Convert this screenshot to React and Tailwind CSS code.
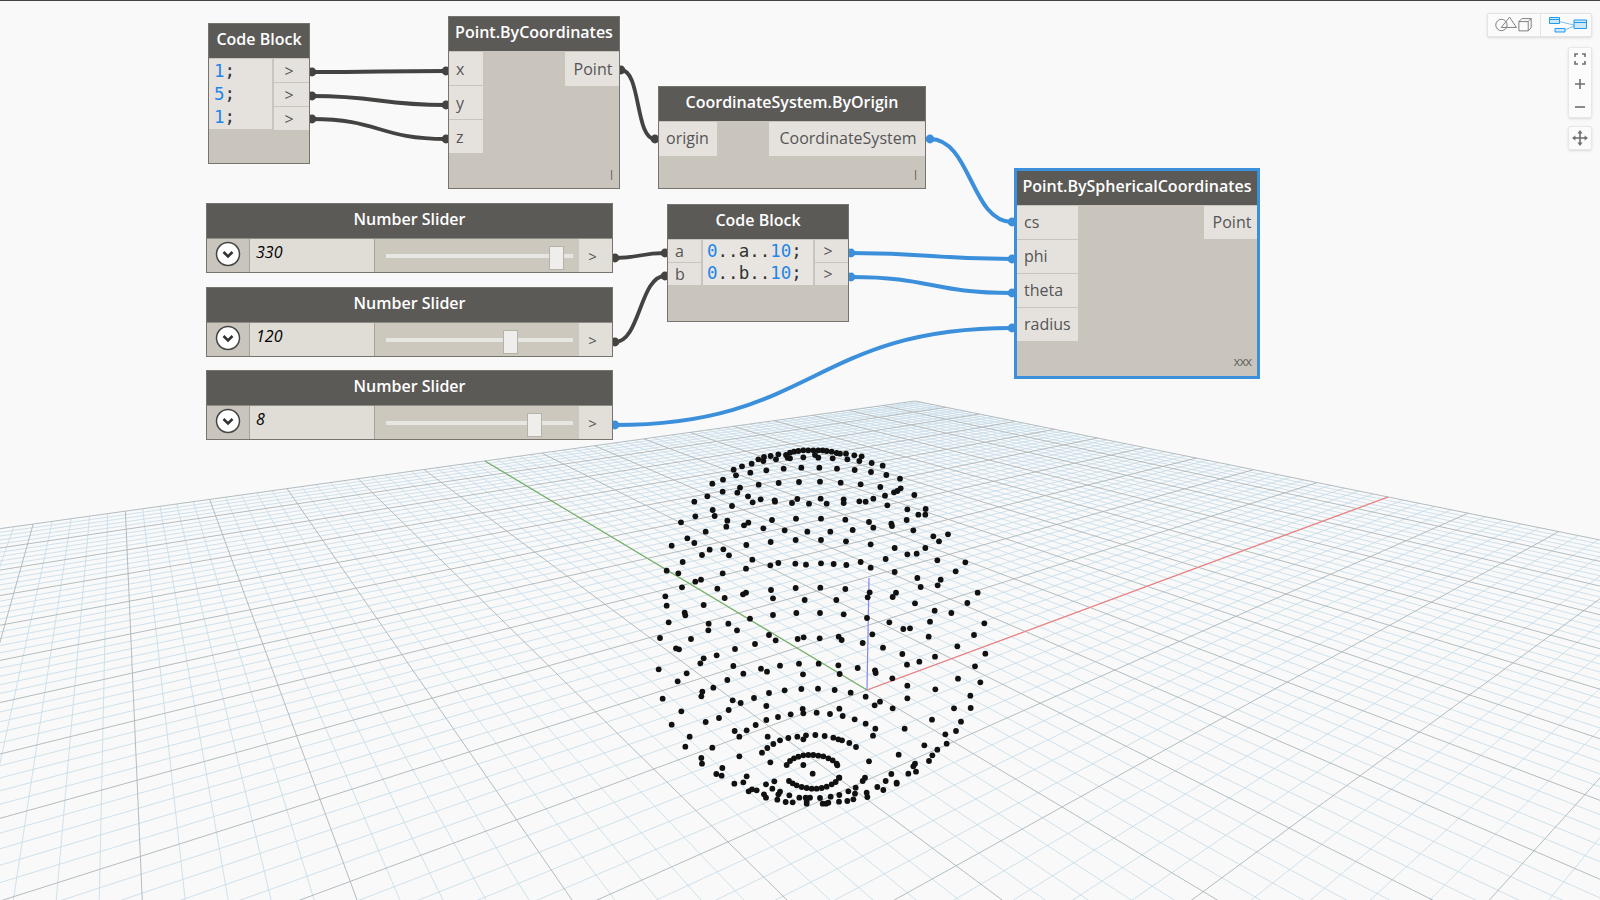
import React from 'react';

// ground plane -> screen, fitted on origin and the axis ends
const H = { a: 1552, b: 116.8, c: 867, d: 175.3, e: 244.1, f: 689, g: 0.7426, h: 1.0285 };
const project = (u, v) => {
  const w = H.g * u + H.h * v + 1;
  return [(H.a * u + H.b * v + H.c) / w, (H.d * u + H.e * v + H.f) / w];
};

const gridLine = (fixed, isU) => {
  // walk back from the far edge until just before the horizon
  const far = 1;
  let near = -1;
  const w = t => (isU ? H.g * fixed + H.h * t + 1 : H.g * t + H.h * fixed + 1);
  if (w(near) < 0.12) {
    const coef = isU ? H.h : H.g;
    const rest = isU ? H.g * fixed + 1 : H.h * fixed + 1;
    near = (0.12 - rest) / coef;
  }
  if (near >= far) return '';
  const p1 = isU ? project(fixed, far) : project(far, fixed);
  const p2 = isU ? project(fixed, near) : project(near, fixed);
  return `M${p1[0].toFixed(1)} ${p1[1].toFixed(1)}L${p2[0].toFixed(1)} ${p2[1].toFixed(1)}`;
};

let minorPath = '';
let majorPath = '';
for (let i = -50; i <= 50; i++) {
  const t = i / 50;
  const seg = gridLine(t, true) + gridLine(t, false);
  if (i % 5 === 0) majorPath += seg;
  else minorPath += seg;
}

// points read off the viewport, in 3x crop coordinates
const upperPts = [[438,72],[450,65],[462,62],[475,60],[490,58],[505,58],[520,58],[535,58],[548,58],[560,60],[575,62],[590,66],[600,68],[415,70],[443,80],[392,75],[372,78],[355,85],[370,90],[408,85],[450,82],[490,79],[525,72],[535,80],[578,82],[618,68],[622,85],[643,73],[665,76],[658,90],[695,96],[728,104],[335,98],[306,106],[281,116],[288,133],[331,125],[379,118],[431,113],[484,110],[538,110],[591,113],[644,117],[693,123],[739,132],[780,143],[249,146],[217,158],[356,161],[416,156],[477,153],[540,152],[602,155],[662,160],[721,168],[248,182],[300,170],[292,185],[202,196],[163,212],[324,196],[338,214],[362,205],[404,208],[405,212],[456,216],[472,204],[507,218],[542,203],[560,218],[611,205],[611,216],[658,211],[677,212],[700,203],[735,194],[742,223],[762,184],[772,180],[782,172],[823,192],[276,225],[218,237],[224,255],[166,256],[123,274],[262,269],[259,287],[312,283],[325,275],[396,267],[468,263],[543,263],[616,266],[687,273],[700,290],[754,278],[756,285],[800,267],[802,235],[835,251],[857,234],[856,251],[197,302],[370,292],[434,298],[502,302],[571,302],[638,297],[820,298],[880,316],[897,331],[924,310],[142,322],[163,336],[95,344],[209,356],[250,355],[319,342],[392,333],[467,327],[543,327],[618,331],[692,340],[764,351],[856,351],[802,370],[830,368],[186,372],[267,373],[337,386],[128,393],[391,403],[415,396],[466,398],[498,401],[543,397],[581,399],[619,402],[662,393],[692,410],[737,384],[892,388],[976,394],[80,419],[115,427],[248,427],[318,413],[764,423],[947,421],[183,446],[166,452],[832,441],[902,446],[126,469],[232,473],[393,477],[467,471],[541,470],[616,474],[893,463],[842,468],[318,485],[309,490],[76,496],[254,501],[399,502],[494,507],[589,507],[683,499],[689,484],[768,485],[758,498],[1013,485],[80,524],[191,522],[825,517],[982,516],[134,545],[136,553],[330,563],[399,552],[469,546],[540,546],[611,550],[681,561],[884,539],[934,546],[86,574],[206,578],[265,578],[748,574],[870,572],[1033,577]];
const lowerPts = [[60,51],[153,54],[205,28],[291,28],[387,42],[407,58],[473,54],[491,49],[539,52],[596,47],[605,57],[668,66],[697,40],[790,24],[810,22],[866,47],[1002,42],[952,76],[1036,98],[729,80],[787,99],[885,107],[108,82],[117,85],[230,103],[285,84],[345,69],[191,112],[181,127],[838,122],[801,131],[1005,136],[56,145],[140,157],[280,135],[363,143],[381,152],[420,134],[477,128],[536,128],[595,133],[653,141],[705,148],[707,156],[310,158],[489,160],[599,159],[113,181],[262,177],[757,172],[954,173],[1021,184],[802,194],[220,200],[886,205],[187,212],[184,226],[387,216],[434,208],[484,204],[534,203],[584,207],[632,215],[677,227],[991,224],[802,232],[68,233],[342,231],[278,238],[302,246],[720,242],[704,253],[379,255],[758,262],[942,262],[992,261],[266,267],[124,271],[488,264],[490,277],[598,263],[452,280],[530,275],[570,279],[414,288],[608,285],[379,297],[237,291],[197,303],[644,295],[876,296],[963,302],[347,312],[677,308],[95,311],[320,328],[284,330],[706,323],[794,323],[948,330],[298,347],[149,347],[699,344],[916,340],[383,347],[472,347],[498,343],[490,355],[526,342],[554,345],[580,350],[595,355],[606,358],[628,366],[648,378],[420,358],[445,351],[400,369],[382,381],[366,395],[136,377],[217,380],[853,373],[920,368],[892,386],[877,403],[776,401],[298,406],[184,411],[186,428],[391,424],[867,420],[825,428],[820,436],[687,421],[247,441],[229,459],[245,464],[320,466],[805,458],[828,452],[754,459],[283,488],[310,484],[378,490],[403,481],[397,503],[737,480],[770,485],[675,470],[668,480],[597,470],[518,458],[490,432],[440,432],[450,420],[462,412],[475,407],[490,403],[505,402],[520,402],[535,404],[550,406],[565,412],[578,418],[590,428],[592,433],[447,480],[458,487],[470,493],[485,498],[500,501],[515,503],[530,503],[545,501],[560,497],[575,490],[587,483],[598,470],[326,511],[336,505],[350,508],[372,520],[378,530],[415,520],[420,512],[412,536],[437,543],[458,544],[448,523],[478,530],[497,530],[510,530],[500,548],[540,531],[548,548],[558,548],[565,545],[572,527],[598,522],[597,542],[625,511],[622,540],[645,518],[640,535],[647,500],[680,515],[682,528],[712,498],[730,507],[770,488],[500,540]];

const wire = (x1, y1, x2, y2) => {
  const k = Math.max(20, (x2 - x1) * 0.5);
  return `M${x1} ${y1}C${x1 + k} ${y1} ${x2 - k} ${y2} ${x2} ${y2}`;
};

const darkWires = [
  [312, 71, 446, 70],
  [312, 95, 446, 104],
  [312, 118, 446, 138],
  [621, 69, 655, 138],
  [615, 257, 665, 252],
  [615, 341, 665, 275],
];
const blueWires = [
  [930, 138, 1012, 221],
  [851, 252, 1012, 258],
  [851, 276, 1012, 292],
  [615, 424, 1012, 327],
];

function Viewport() {
  return (
    <svg className="absolute inset-0" width="1600" height="900" viewBox="0 0 1600 900">
      <path d={minorPath} fill="none" stroke="#c4dbe8" strokeWidth="0.8" />
      <path d={majorPath} fill="none" stroke="#aab5ba" strokeWidth="0.9" />
      <line x1="867" y1="689" x2="485" y2="460" stroke="#79b46c" strokeWidth="1.2" />
      <line x1="867" y1="689" x2="1388" y2="496" stroke="#f47f7f" strokeWidth="1.2" />
      <line x1="867" y1="689" x2="869" y2="577" stroke="#8585f0" strokeWidth="1.2" />
      {upperPts.map(([x, y], i) => (
        <circle key={i} cx={640 + x / 3} cy={430 + y / 3} r="2.9" fill="#111" />
      ))}
      {lowerPts.map(([x, y], i) => (
        <circle key={i} cx={640 + x / 3} cy={620 + y / 3} r="2.9" fill="#111" />
      ))}
    </svg>
  );
}

function Wires() {
  return (
    <svg className="absolute inset-0" width="1600" height="900" viewBox="0 0 1600 900">
      {darkWires.map(([a, b, c, d], i) => (
        <g key={i}>
          <path d={wire(a, b, c, d)} fill="none" stroke="#444341" strokeWidth="3.8" />
          <circle cx={a} cy={b} r="4.4" fill="#444341" />
          <circle cx={c} cy={d} r="4.4" fill="#444341" />
        </g>
      ))}
      {blueWires.map(([a, b, c, d], i) => (
        <g key={i}>
          <path d={wire(a, b, c, d)} fill="none" stroke="#3c8fdb" strokeWidth="4" />
          <circle cx={a} cy={b} r="4.4" fill="#3c8fdb" />
          <circle cx={c} cy={d} r="4.4" fill="#3c8fdb" />
        </g>
      ))}
    </svg>
  );
}

function Node({ title, className, selected, children }) {
  return (
    <div
      className={`absolute flex flex-col bg-[#c9c5bd] ${
        selected ? 'border-[3px] border-[#3c8fdb]' : 'border border-[#77746e]'
      } ${className}`}
    >
      <div className="flex h-[34px] shrink-0 items-center justify-center bg-[#5c5a57] pb-[4px] text-[16px] font-semibold text-white">
        {title}
      </div>
      {children}
    </div>
  );
}

function Cell({ className, children }) {
  return (
    <div className={`flex items-center bg-[#e5e2de] text-[16px] text-[#555] ${className}`}>
      {children}
    </div>
  );
}

function Slider({ className, value, thumbClass }) {
  return (
    <Node title="Number Slider" className={`left-[206px] h-[70px] w-[407px] ${className}`}>
      <div className="flex flex-1 border-t border-[#8f8c86]">
        <div className="flex w-[43px] items-center justify-center border-r border-[#a5a29c] bg-[#c9c5bd] pb-[3px]">
          <svg width="26" height="26" viewBox="0 0 26 26">
            <circle cx="13" cy="13" r="11.5" fill="#fff" stroke="#444" strokeWidth="1.5" />
            <path d="M8.5 11 13 15.5 17.5 11" fill="none" stroke="#333" strokeWidth="2.6" />
          </svg>
        </div>
        <div className="w-[125px] border-r border-[#a5a29c] bg-[#e0ddd7] pl-[6px] text-[16px] leading-[26px] text-black italic">
          {value}
        </div>
        <div className="relative flex flex-1 items-center bg-[#cdc8be] pl-[11px] pr-[6px]">
          <div className="h-[4px] flex-1 bg-[#e8e6e2]" />
          <div className={`absolute top-[7px] h-[24px] w-[15px] border border-[#b5b2ac] bg-[#efeeec] ${thumbClass}`} />
        </div>
        <div className="flex w-[33px] items-center justify-center bg-[#e2dfd9] pr-[6px] pt-[2px] text-[15px] text-[#555]">
          &gt;
        </div>
      </div>
    </Node>
  );
}

function Code({ children }) {
  return (
    <span className="font-['DejaVu_Sans_Mono',monospace] text-[17.5px] text-[#333]">
      {children}
    </span>
  );
}

function Toolbar() {
  return (
    <>
      <div className="absolute left-[1487px] top-[12px] flex h-[24px] w-[105px] rounded-[2px] border border-[#e4e4e4] bg-[#fbfbfb] shadow-sm">
        <svg width="53" height="22" viewBox="0 0 53 22" className="border-r border-[#e4e4e4]">
          <g fill="none" stroke="#7d7d7d" strokeWidth="1">
            <circle cx="13.7" cy="11" r="5.8" />
            <path d="M22 3 29 13.5H13.5Z" />
            <path d="M31.5 7.5h9.5v9.5h-9.5zM31.5 7.5l3-3h9.5v9.5l-3 3M41 7.5l3-3" />
          </g>
        </svg>
        <svg width="50" height="22" viewBox="0 0 50 22">
          <path d="M18 7.5 33 11M24 16l9-4" fill="none" stroke="#7cc2f5" strokeWidth="1" />
          <path d="M8.5 3.5h10v6h-10zM14 14.5h10v3.5h-10zM33 6h12.5v8.5H33z" fill="#cfe7fb" stroke="#1f9bf0" strokeWidth="1" />
          <path d="M8.5 5.5h10M33 8.5h12.5" fill="none" stroke="#1f9bf0" strokeWidth="1" />
        </svg>
      </div>
      <div className="absolute left-[1568px] top-[46px] flex h-[71px] w-[24px] flex-col items-center rounded-[2px] border border-[#e8e8e8] bg-[#fbfbfb] shadow-sm">
        <svg width="22" height="69" viewBox="0 0 22 69">
          <path
            d="M6 9V6h3M13 6h3v3M16 13v3h-3M9 16H6v-3"
            fill="none"
            stroke="#6f6f6f"
            strokeWidth="1.6"
          />
          <path d="M6 36h10M11 31v10" fill="none" stroke="#6f6f6f" strokeWidth="1.6" />
          <path d="M6 59h10" fill="none" stroke="#6f6f6f" strokeWidth="1.6" />
        </svg>
      </div>
      <div className="absolute left-[1568px] top-[125px] flex h-[24px] w-[24px] items-center justify-center rounded-[2px] border border-[#e8e8e8] bg-[#fbfbfb] shadow-sm">
        <svg width="16" height="16" viewBox="0 0 16 16" fill="#6f6f6f">
          <path d="M7.2 3h1.6v10H7.2zM3 7.2h10v1.6H3z" />
          <path d="M8 0l2.6 3.4H5.4zM8 16l-2.6-3.4h5.2zM0 8l3.4-2.6v5.2zM16 8l-3.4 2.6V5.4z" />
        </svg>
      </div>
    </>
  );
}

export default function App() {
  return (
    <div className="relative h-[900px] w-[1600px] overflow-hidden border-t border-[#444] bg-[#f9f9f9] font-['Open_Sans',sans-serif]">
      <Viewport />
      <Wires />

      <Node title="Code Block" className="left-[208px] top-[22px] h-[141px] w-[102px]">
        <div className="flex gap-[2px] pt-[1px]">
          <div className="flex h-[70px] w-[63px] flex-col bg-[#e5e2de] pl-[5px] pt-[1px] leading-[23px]">
            {['1', '5', '1'].map((n, i) => (
              <div key={i} className="h-[23px]">
                <Code>
                  <span className="text-[#1f86e8]">{n}</span>;
                </Code>
              </div>
            ))}
          </div>
          <div className="flex flex-1 flex-col gap-[1px]">
            {[0, 1, 2].map(i => (
              <Cell key={i} className="h-[23px] justify-center pr-[5px] text-[15px]">&gt;</Cell>
            ))}
          </div>
        </div>
      </Node>

      <Node title="Point.ByCoordinates" className="left-[448px] top-[15px] h-[173px] w-[172px]">
        <div className="relative flex flex-1 flex-col gap-[1px] pt-[1px]">
          {['x', 'y', 'z'].map(p => (
            <Cell key={p} className="h-[33px] w-[34px] pl-[7px]">{p}</Cell>
          ))}
          <Cell className="absolute right-0 top-[1px] h-[34px] w-[54px] justify-center pl-[2px]">Point</Cell>
          <span className="absolute bottom-[3px] right-[6px] text-[12px] text-[#666]">l</span>
        </div>
      </Node>

      <Node title="CoordinateSystem.ByOrigin" className="left-[658px] top-[85px] h-[103px] w-[268px]">
        <div className="relative flex flex-1 pt-[1px]">
          <Cell className="h-[34px] w-[58px] pb-[3px] pl-[7px]">origin</Cell>
          <Cell className="absolute right-0 top-[1px] h-[34px] w-[156px] justify-center pb-[3px] pl-[2px]">CoordinateSystem</Cell>
          <span className="absolute bottom-[3px] right-[8px] text-[12px] text-[#666]">l</span>
        </div>
      </Node>

      <Node title="Code Block" className="left-[667px] top-[203px] h-[118px] w-[182px]">
        <div className="flex gap-[2px] pt-[1px]">
          <div className="flex w-[33px] flex-col gap-[1px]">
            <Cell className="h-[22px] pl-[7px]">a</Cell>
            <Cell className="h-[22px] pl-[7px]">b</Cell>
          </div>
          <div className="flex h-[45px] w-[110px] flex-col bg-[#e8e5e1] pl-[4px] leading-[22px]">
            {['a', 'b'].map(v => (
              <div key={v} className="h-[22px]">
                <Code>
                  <span className="text-[#1f86e8]">0</span>..{v}..<span className="text-[#1f86e8]">10</span>;
                </Code>
              </div>
            ))}
          </div>
          <div className="flex flex-1 flex-col gap-[1px]">
            <Cell className="h-[22px] justify-center pr-[7px] text-[15px]">&gt;</Cell>
            <Cell className="h-[22px] justify-center pr-[7px] text-[15px]">&gt;</Cell>
          </div>
        </div>
      </Node>

      <Node title="Point.BySphericalCoordinates" selected className="left-[1014px] top-[167px] h-[211px] w-[246px]">
        <div className="relative flex flex-1 flex-col gap-[1px] pt-[1px]">
          {['cs', 'phi', 'theta', 'radius'].map(p => (
            <Cell key={p} className="h-[33px] w-[61px] pb-[2px] pl-[7px]">{p}</Cell>
          ))}
          <Cell className="absolute right-0 top-[1px] h-[33px] w-[53px] justify-center pb-[2px] pl-[3px]">Point</Cell>
          <span className="absolute bottom-[5px] right-[6px] text-[13px] tracking-[-1px] text-[#666]">xxx</span>
        </div>
      </Node>

      <Slider className="top-[202px]" value="330" thumbClass="left-[174px]" />
      <Slider className="top-[286px]" value="120" thumbClass="left-[128px]" />
      <Slider className="top-[369px]" value="8" thumbClass="left-[152px]" />

      <Toolbar />
    </div>
  );
}
